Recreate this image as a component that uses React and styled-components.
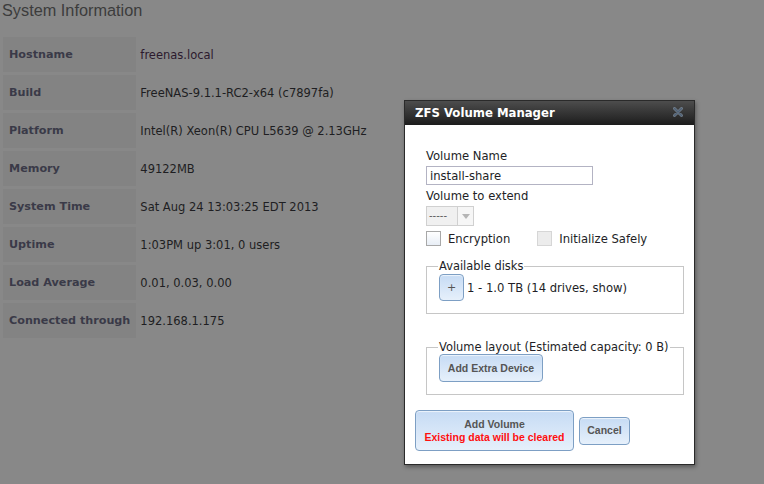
import React from "react";
import styled, { createGlobalStyle } from "styled-components";

const GlobalStyle = createGlobalStyle`
    html, body {
        margin: 0;
        padding: 0;
    }
    body {
        font-family: "DejaVu Sans", Verdana, sans-serif;
    }
`;

const rows = [
    ["Hostname", "freenas.local"],
    ["Build", "FreeNAS-9.1.1-RC2-x64 (c7897fa)"],
    ["Platform", "Intel(R) Xeon(R) CPU L5639 @ 2.13GHz"],
    ["Memory", "49122MB"],
    ["System Time", "Sat Aug 24 13:03:25 EDT 2013"],
    ["Uptime", "1:03PM up 3:01, 0 users"],
    ["Load Average", "0.01, 0.03, 0.00"],
    ["Connected through", "192.168.1.175"],
];

const CloseIcon = () => (
    <svg width="10" height="10" viewBox="0 0 10 10">
        <path d="M1.5 1.5 L8.5 8.5 M8.5 1.5 L1.5 8.5" stroke="#8797a8" strokeWidth="3" strokeLinecap="round" opacity="0.7" />
        <path d="M1.5 1.5 L8.5 8.5 M8.5 1.5 L1.5 8.5" stroke="#4f6277" strokeWidth="1.4" strokeLinecap="round" />
    </svg>
);

const App = () => {
    return (
        <Page>
            <GlobalStyle />
            <Heading>System Information</Heading>
            <InfoTable>
                <tbody>
                    {rows.map(([label, value]) => (
                        <tr key={label}>
                            <Label>{label}</Label>
                            <Value $accent={label === "Hostname"}>{value}</Value>
                        </tr>
                    ))}
                </tbody>
            </InfoTable>

            <Dialog>
                <TitleBar>
                    <Title>ZFS Volume Manager</Title>
                    <Close>
                        <CloseIcon />
                    </Close>
                </TitleBar>
                <Body>
                    <FieldLabel>Volume Name</FieldLabel>
                    <TextInput defaultValue="install-share" />
                    <FieldLabel>Volume to extend</FieldLabel>
                    <Select>
                        <SelectText>-----</SelectText>
                        <SelectArrow>
                            <svg width="8" height="5" viewBox="0 0 8 5">
                                <path d="M0 0 L8 0 L4 5 Z" fill="#b5b5b5" />
                            </svg>
                        </SelectArrow>
                    </Select>
                    <CheckRow>
                        <Check>
                            <Box />
                            Encryption
                        </Check>
                        <Check>
                            <Box $disabled />
                            Initialize Safely
                        </Check>
                    </CheckRow>
                    <Fieldset>
                        <Legend>Available disks</Legend>
                        <DiskRow>
                            <PlusButton>+</PlusButton>
                            <span>1 - 1.0 TB (14 drives, show)</span>
                        </DiskRow>
                    </Fieldset>
                    <Fieldset $layout>
                        <Legend>Volume layout (Estimated capacity: 0 B)</Legend>
                        <Button>Add Extra Device</Button>
                    </Fieldset>
                </Body>
                <Actions>
                    <Button $wide>
                        Add Volume
                        <Warning>Existing data will be cleared</Warning>
                    </Button>
                    <Button $cancel>Cancel</Button>
                </Actions>
            </Dialog>
        </Page>
    );
};

export default App;

const Page = styled.div`
    position: relative;
    width: 764px;
    height: 484px;
    background: #888888;
    overflow: hidden;
`;

const Heading = styled.h1`
    margin: 0;
    padding: 1px 2px 0;
    font-family: "Liberation Sans", Arial, sans-serif;
    font-size: 16.3px;
    font-weight: normal;
    color: #3c3c3c;
    height: 33px;
`;

const InfoTable = styled.table`
    border-spacing: 3px;
`;

const Label = styled.th`
    background: #838383;
    color: #3a3a48;
    text-align: left;
    font-size: 11.2px;
    font-weight: bold;
    height: 35px;
    padding: 0 6px;
    box-sizing: border-box;
    white-space: nowrap;
`;

const Value = styled.td`
    color: ${(p) => (p.$accent ? "#2c1a2e" : "#1e1e22")};
    font-size: 11.5px;
    padding: 0 0 0 1px;
    white-space: nowrap;
`;

const Dialog = styled.div`
    position: absolute;
    left: 404px;
    top: 100px;
    width: 289px;
    height: 363px;
    background: #ffffff;
    border: 1px solid #2a2a2a;
    box-shadow: 1px 2px 4px rgba(0, 0, 0, 0.35);
    display: flex;
    flex-direction: column;
    font-size: 11.6px;
    color: #221e26;
`;

const TitleBar = styled.div`
    height: 24px;
    display: flex;
    align-items: center;
    justify-content: space-between;
    padding: 0 11px 0 10px;
    background: linear-gradient(#4d4d4d, #1c1c1c);
`;

const Title = styled.span`
    color: #ffffff;
    font-weight: bold;
    font-size: 11.7px;
`;

const Close = styled.span`
    display: flex;
    margin-top: -2px;
`;

const Body = styled.div`
    padding: 24px 10px 0 21px;
    display: flex;
    flex-direction: column;
    align-items: flex-start;
`;

const FieldLabel = styled.div`
    line-height: 14px;
    margin-bottom: 3px;
`;

const TextInput = styled.input`
    width: 167px;
    height: 19px;
    box-sizing: border-box;
    border: 1px solid #b3b3c3;
    padding: 0 3px;
    font-family: inherit;
    font-size: 11.6px;
    color: #221e26;
    margin: 0 0 4px;
    outline: none;
`;

const Select = styled.div`
    display: flex;
    height: 20px;
    border: 1px solid #d0d0d0;
    background: #f0f0f0;
    box-sizing: border-box;
    margin-bottom: 5px;
`;

const SelectText = styled.span`
    width: 28px;
    padding-left: 2px;
    line-height: 17px;
    color: #5a5a5a;
    font-size: 10px;
`;

const SelectArrow = styled.span`
    width: 15px;
    border-left: 1px solid #d0d0d0;
    background: #f6f6f6;
    display: flex;
    align-items: center;
    justify-content: center;
`;

const CheckRow = styled.div`
    display: flex;
    gap: 27px;
    margin-bottom: 14px;
`;

const Check = styled.label`
    display: flex;
    align-items: center;
    gap: 7px;
`;

const Box = styled.span`
    width: 13px;
    height: 13px;
    border: 1px solid ${(p) => (p.$disabled ? "#d6d6d6" : "#a8a8a8")};
    background: ${(p) => (p.$disabled ? "#ececec" : "linear-gradient(#ffffff, #e8eef6)")};
`;

const Fieldset = styled.fieldset`
    width: 258px;
    min-width: 0;
    box-sizing: border-box;
    margin: 0 0 ${(p) => (p.$layout ? "15px" : "27px")};
    padding: 0 12px 12px;
    border: 1px solid #c6c6c6;
    min-height: 50px;
`;

const Legend = styled.legend`
    padding: 0 1px;
    margin-left: -1px;
    line-height: 13px;
    font-size: 11.45px;
    white-space: nowrap;
`;

const DiskRow = styled.div`
    display: flex;
    align-items: center;
    gap: 3px;
    margin-top: 1px;
`;

const ButtonBase = styled.button`
    font-family: "Liberation Sans", Arial, sans-serif;
    font-size: 10.5px;
    font-weight: bold;
    color: #555555;
    border: 1px solid #7d9fc4;
    border-radius: 4px;
    background: linear-gradient(#c6dbf4, #e6f0fb);
    box-shadow: inset 0 1px 1px rgba(255, 255, 255, 0.7);
    cursor: pointer;
    white-space: nowrap;
`;

const PlusButton = styled(ButtonBase)`
    width: 25px;
    height: 27px;
    padding: 0;
    font-family: "DejaVu Sans", Verdana, sans-serif;
    font-weight: normal;
    font-size: 11px;
`;

const Button = styled(ButtonBase)`
    display: flex;
    flex-direction: column;
    align-items: center;
    justify-content: center;
    height: ${(p) => (p.$wide ? "41px" : "28px")};
    width: ${(p) => (p.$wide ? "159px" : p.$cancel ? "51px" : "104px")};
    padding: 0;
    line-height: 13px;
`;

const Warning = styled.span`
    color: #ff1010;
`;

const Actions = styled.div`
    display: flex;
    align-items: center;
    gap: 5px;
    padding-left: 10px;
`;
